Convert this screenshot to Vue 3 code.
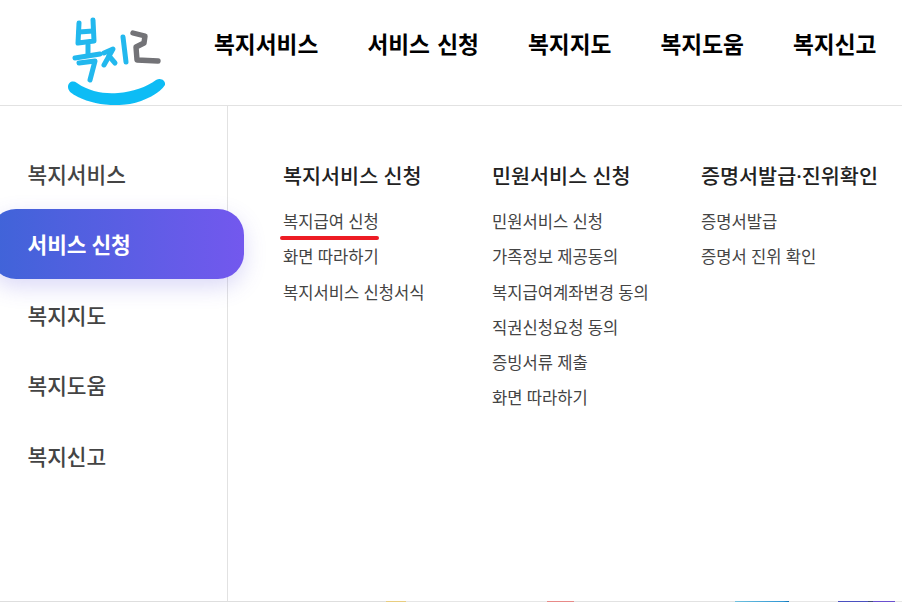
<script setup>
const topNav = ['복지서비스', '서비스 신청', '복지지도', '복지도움', '복지신고']
const side = ['복지서비스', '서비스 신청', '복지지도', '복지도움', '복지신고']
const cols = [
  { title: '복지서비스 신청', links: ['복지급여 신청', '화면 따라하기', '복지서비스 신청서식'] },
  { title: '민원서비스 신청', links: ['민원서비스 신청', '가족정보 제공동의', '복지급여계좌변경 동의', '직권신청요청 동의', '증빙서류 제출', '화면 따라하기'] },
  { title: '증명서발급·진위확인', links: ['증명서발급', '증명서 진위 확인'] }
]
</script>

<template>
  <div class="page">
    <header class="header">
      <svg class="logo" width="130" height="105" viewBox="45 0 130 105" fill="none" stroke-linecap="round" stroke-linejoin="round">
        <defs>
          <filter id="soft" x="-10%" y="-10%" width="120%" height="120%">
            <feGaussianBlur stdDeviation="0.5" />
          </filter>
        </defs>
        <g filter="url(#soft)">
          <g stroke="#22b8ee" stroke-width="5">
            <path d="M79 23 L78 43 L94 41 L93 20" />
            <path d="M79 32 L93 31" />
            <path d="M75 58 L100 54" />
            <path d="M88 45 L88 55" />
            <path d="M79 63 L95 61 L90 80" />
            <path d="M104 53 L113 49 L104 65" />
            <path d="M109 56 L115 63" />
            <path d="M123 37 L126 62" />
          </g>
          <path d="M133 33 L145 36 L144 43 L136 47 L137 60 L158 61" stroke="#737377" stroke-width="5.4" />
          <path d="M68 87 C68 82 73 80 77 83 C90 92 104 94 118 93 C132 92 147 87 156 80 C161 77 166 81 165 85 C160 93 145 101 130 104 C112 107 92 104 78 97 C72 94 68 91 68 87 Z" fill="#0cbcf5" />
        </g>
      </svg>
      <nav class="top-nav">
        <a v-for="t in topNav" :key="t" class="top-link">{{ t }}</a>
      </nav>
    </header>
    <div class="body">
      <aside class="side">
        <a v-for="(s, i) in side" :key="s" class="side-item" :class="{ active: i === 1 }">{{ s }}</a>
      </aside>
      <main class="cols">
        <section v-for="(c, ci) in cols" :key="c.title" class="col">
          <h3 class="col-title">{{ c.title }}</h3>
          <ul class="links">
            <li v-for="(l, li) in c.links" :key="l" class="link" :class="{ current: ci === 0 && li === 0 }">{{ l }}</li>
          </ul>
        </section>
      </main>
    </div>
    <div class="peek"></div>
  </div>
</template>

<style>
html, body { margin: 0; background: #fff; overflow: hidden; }
</style>

<style scoped>
.page {
  width: 902px;
  height: 602px;
  display: flex;
  flex-direction: column;
  overflow: hidden;
  font-family: "Noto Sans CJK KR", "Noto Sans", sans-serif;
}
.header {
  height: 106px;
  flex: none;
  box-sizing: border-box;
  border-bottom: 1px solid #e2e2e2;
  display: flex;
  align-items: flex-start;
  padding-left: 45px;
}
.logo { flex: none; }
.top-nav {
  display: flex;
  gap: 49px;
  margin-left: 39px;
  height: 87px;
  align-items: center;
}
.top-link {
  font-size: 22.7px;
  font-weight: 700;
  color: #000;
  word-spacing: 2px;
  white-space: nowrap;
}
.body { flex: 1; display: flex; min-height: 0; }
.side {
  width: 228px;
  flex: none;
  box-sizing: border-box;
  border-right: 1px solid #e2e2e2;
  padding-top: 32.5px;
  display: flex;
  flex-direction: column;
}
.side-item {
  height: 70.4px;
  flex: none;
  display: flex;
  align-items: center;
  padding-left: 27.5px;
  font-size: 21.4px;
  font-weight: 500;
  color: #444;
  white-space: nowrap;
  box-sizing: border-box;
}
.side-item.active {
  width: 254px;
  margin-left: -10px;
  padding-left: 37.5px;
  padding-bottom: 1px;
  border-radius: 26px;
  color: #fff;
  font-weight: 700;
  background: linear-gradient(90deg, #3f64d8, #7358ee);
  box-shadow: 0 8px 22px rgba(90, 80, 220, 0.22);
  position: relative;
}
.cols { display: flex; padding: 55px 0 0 55px; }
.col { width: 209px; flex: none; }
.col-title {
  margin: 0 0 13.2px;
  font-family: "Noto Sans", "Noto Sans CJK KR", sans-serif;
  font-size: 20.7px;
  line-height: 30px;
  font-weight: 500;
  color: #222;
  white-space: nowrap;
}
.links { list-style: none; margin: 0; padding: 0; }
.link {
  height: 35.2px;
  line-height: 35.2px;
  font-size: 16.6px;
  word-spacing: 0.5px;
  color: #444;
  white-space: nowrap;
  position: relative;
}
.link.current::after {
  content: "";
  position: absolute;
  left: -3px;
  top: 32px;
  width: 99px;
  height: 3.5px;
  border-radius: 2px;
  background: #ed1c24;
}
.peek {
  height: 1px;
  flex: none;
  background: linear-gradient(90deg,
    #dedede 0 386px, #e8cd80 386px 406px,
    #e6e6e6 406px 547px, #e88a88 547px 574px,
    #e2e2e2 574px 735px, #6fc0de 735px, #2f96d4 783px, #0a6fb0 789px,
    #e6e6e6 789px 838px, #4a50c0 838px 868px, #3d4a78 868px 873px, #6a50d0 873px 895px,
    #e6e6e6 895px);
}
</style>
